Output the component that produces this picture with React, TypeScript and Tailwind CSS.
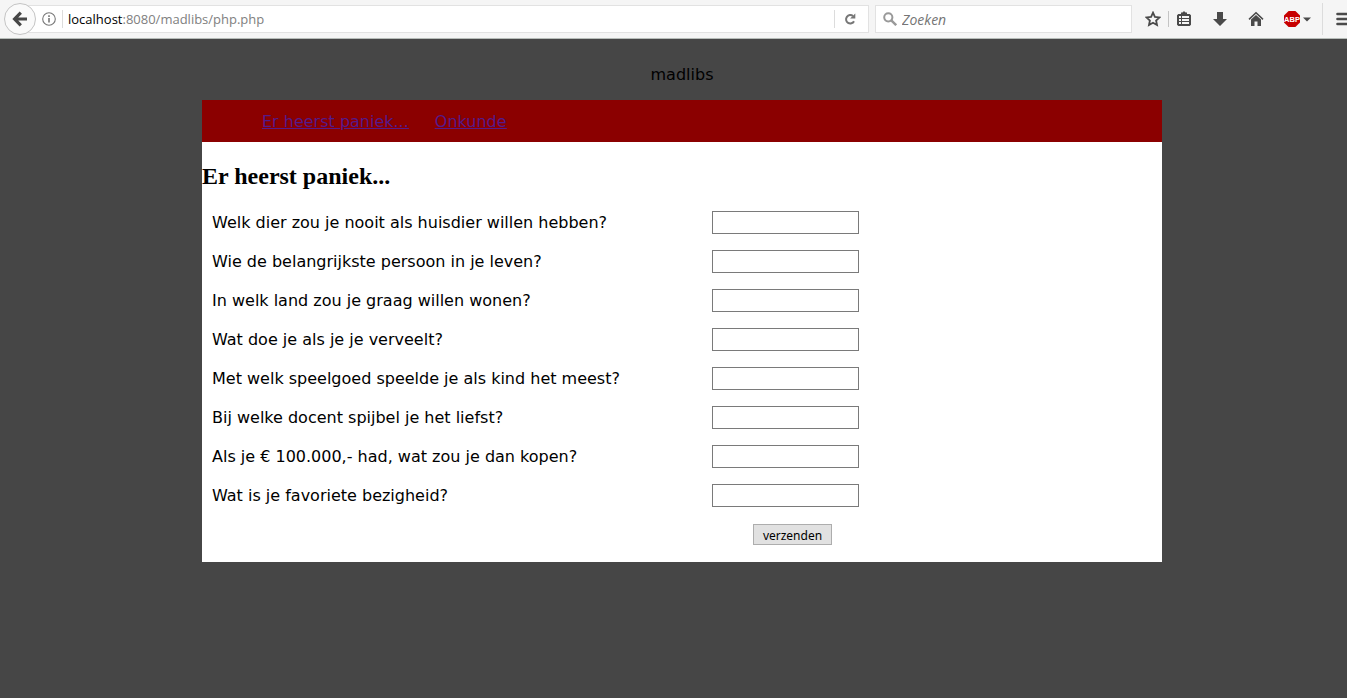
import React from "react";

const questions: string[] = [
  "Welk dier zou je nooit als huisdier willen hebben?",
  "Wie de belangrijkste persoon in je leven?",
  "In welk land zou je graag willen wonen?",
  "Wat doe je als je je verveelt?",
  "Met welk speelgoed speelde je als kind het meest?",
  "Bij welke docent spijbel je het liefst?",
  "Als je € 100.000,- had, wat zou je dan kopen?",
  "Wat is je favoriete bezigheid?",
];

function ToolButton({ label, children }: { label: string; children: React.ReactNode }) {
  return (
    <button type="button" aria-label={label} className="flex h-7 w-9 shrink-0 items-center justify-center">
      {children}
    </button>
  );
}

function BrowserBar() {
  return (
    <header className="flex h-[39px] items-center border-b border-[#b6bcb8] bg-[#f5f5f5] pl-1 font-['Open_Sans',sans-serif] text-[13px]">
      <button
        type="button"
        aria-label="Terug"
        className="z-10 flex size-8 shrink-0 items-center justify-center rounded-full border border-[#c4c4c4] bg-[#fafafa]"
      >
        <svg width="16" height="16" viewBox="0 0 16 16" fill="none" stroke="#474747" strokeWidth="3.2">
          <path d="M8.8 1.6 2.6 8l6.2 6.4M3 8h12" />
        </svg>
      </button>
      <div className="-ml-4 flex h-7 flex-1 items-center border border-[#e2e2e2] bg-white pl-[21px]">
        <svg width="14" height="14" viewBox="0 0 14 14" fill="none" stroke="#777" className="shrink-0">
          <circle cx="7" cy="7" r="6.3" strokeWidth="1.1" />
          <path d="M7 6v4.6M7 3.2v1.7" strokeWidth="1.6" />
        </svg>
        <span className="ml-1.5 h-[18px] w-px bg-[#dcdcdc]" />
        <span className="flex-1 pt-0.5 pl-[5px] text-[#808080]">
          <span className="text-black">localhost</span>:8080/madlibs/php.php
        </span>
        <span className="h-[18px] w-px bg-[#dcdcdc]" />
        <button type="button" aria-label="Vernieuwen" className="flex h-full w-[33px] items-center justify-center pr-1">
          <svg width="12" height="12" viewBox="0 0 12 12">
            <path d="M9 3.1A4.2 4.2 0 1 0 10 8.2" fill="none" stroke="#777" strokeWidth="2" />
            <path d="M11.3.4v5.2H6.1z" fill="#777" />
          </svg>
        </button>
      </div>
      <label className="ml-1.5 flex h-7 w-[257px] shrink-0 items-center border border-[#e2e2e2] bg-white pl-[7px]">
        <svg width="14" height="14" viewBox="0 0 14 14" fill="none" stroke="#999" className="shrink-0">
          <circle cx="5.3" cy="5.3" r="4.1" strokeWidth="2" />
          <path d="m8.3 8.3 4.9 4.9" strokeWidth="2.4" />
        </svg>
        <input
          type="text"
          aria-label="Zoeken"
          placeholder="Zoeken"
          className="ml-[5px] min-w-0 flex-1 bg-transparent pt-0.5 text-sm italic outline-none placeholder:text-[#757575]"
        />
      </label>
      <div className="flex shrink-0 items-center pl-[3px]">
        <ToolButton label="Bladwijzer">
          <svg width="16" height="16" viewBox="0 0 16 16" fill="none" stroke="#4a4a4a" strokeWidth="1.8">
            <path d="m8 1.7 1.9 4.2 4.6.5-3.4 3.1.9 4.5L8 11.7 4 14l.9-4.5L1.5 6.4l4.6-.5z" />
          </svg>
        </ToolButton>
        <span className="-ml-[3px] h-4 w-px bg-[#c4c4c4]" />
        <span className="-ml-[3px] flex">
          <ToolButton label="Bladwijzers tonen">
            <svg width="16" height="16" viewBox="0 0 16 16">
              <path
                fill="#4a4a4a"
                fillRule="evenodd"
                d="M5 3V1.6h1.5L7.3.5h1.4l.8 1.1H11V3h2.7L15 4.3v9.4L13.7 15H2.3L1 13.7V4.3L2.3 3zM3 5v2h2V5zm3 0v2h7V5zM3 8v2h2V8zm3 0v2h7V8zM3 11v2h2v-2zm3 0v2h7v-2z"
              />
            </svg>
          </ToolButton>
          <ToolButton label="Downloads">
            <svg width="16" height="16" viewBox="0 0 16 16" fill="#4a4a4a">
              <path d="M5 1h6v7h4l-7 7-7-7h4z" />
            </svg>
          </ToolButton>
          <ToolButton label="Startpagina">
            <svg width="16" height="16" viewBox="0 0 16 16">
              <path d="M1 8.4 8 1.7l7 6.7" fill="none" stroke="#4a4a4a" strokeWidth="1.5" />
              <path d="M3 8.6 8 4l5 4.6V15H9.5v-4.5h-3V15H3z" fill="#4a4a4a" />
            </svg>
          </ToolButton>
        </span>
        <button type="button" aria-label="Adblock Plus" className="ml-[9px] flex items-center gap-[2px]">
          <svg width="18" height="18" viewBox="0 0 18 18">
            <path d="M5.6 1h6.8L17 5.6v6.8L12.4 17H5.6L1 12.4V5.6z" fill="#c70000" />
            <text
              x="9"
              y="11.7"
              textAnchor="middle"
              fill="#fff"
              fontSize="7.5"
              fontWeight="700"
              fontFamily="Liberation Sans, sans-serif"
            >
              ABP
            </text>
          </svg>
          <svg width="8" height="5" viewBox="0 0 8 5" fill="#4a4a4a">
            <path d="M0 .5h8L4 4.5z" />
          </svg>
        </button>
        <span className="ml-[11px] h-8 w-px bg-[#dcdcdc]" />
        <button type="button" aria-label="Menu" className="flex w-[41px] pl-[13px]">
          <svg width="16" height="14" viewBox="0 0 16 14" stroke="#4a4a4a" strokeWidth="2.6" strokeLinecap="round">
            <path d="M1.5 2h13M1.5 7h13M1.5 12h13" />
          </svg>
        </button>
      </div>
    </header>
  );
}

export default function App() {
  return (
    <div className="min-h-screen overflow-hidden bg-[#464646]">
      <div className="w-[calc(100%+17px)]">
        <BrowserBar />
        <div className="mx-auto max-w-[960px] pt-[25px] font-['DejaVu_Sans',sans-serif] text-base text-black">
          <p className="text-center leading-[22px]">madlibs</p>
          <nav className="mt-[14px] flex h-[42px] items-center gap-[26px] bg-[#8b0000] pt-0.5 pl-[60px] text-[#551a8b] underline">
            <a href="#paniek">Er heerst paniek...</a>
            <a href="#onkunde">Onkunde</a>
          </nav>
          <main className="bg-white pt-5 pb-[17px]">
            <h2 className="font-['Liberation_Serif',serif] text-2xl leading-7 font-bold">Er heerst paniek...</h2>
            <form className="mt-[21px] flex flex-col gap-4 pl-[10px]" onSubmit={(e) => e.preventDefault()}>
              {questions.map((question, i) => (
                <div key={question} className="flex h-[23px] items-center">
                  <label htmlFor={`vraag-${i}`} className="w-[500px]">
                    {question}
                  </label>
                  <input
                    id={`vraag-${i}`}
                    type="text"
                    className="h-full w-[147px] border border-[#7a7a7a] bg-white px-1 text-[13px]"
                  />
                </div>
              ))}
              <button
                type="submit"
                className="mt-px ml-[541px] flex h-[21px] w-[79px] items-center justify-center border border-[#adadad] bg-[#e1e1e1] pt-0.5 font-['Noto_Sans',sans-serif] text-xs"
              >
                verzenden
              </button>
            </form>
          </main>
        </div>
      </div>
    </div>
  );
}
